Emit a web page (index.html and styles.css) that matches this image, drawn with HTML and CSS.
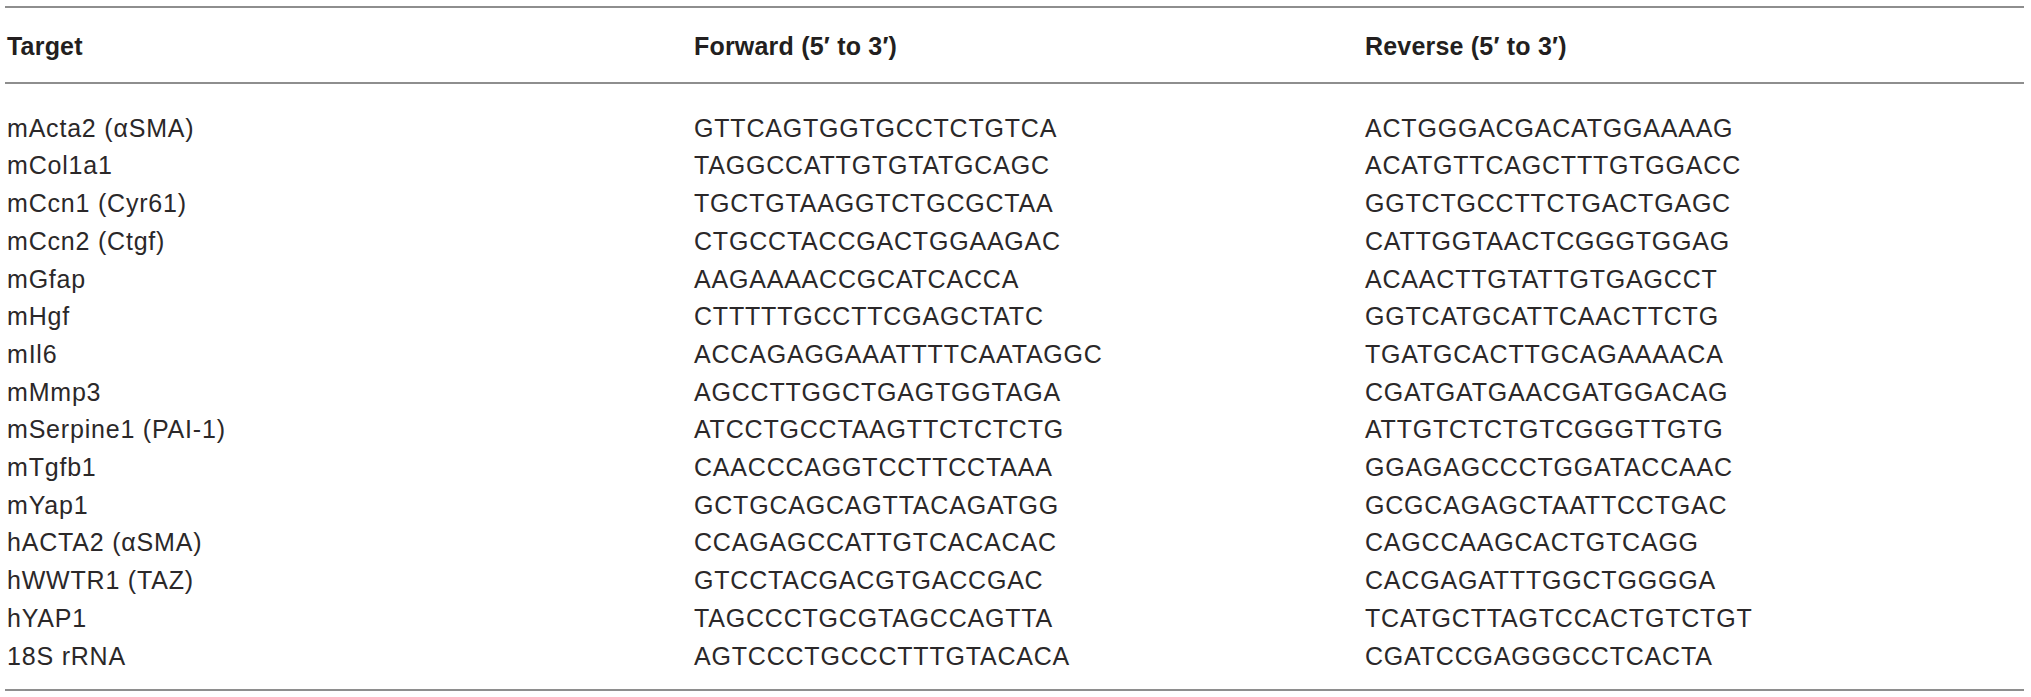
FILE: index.html
```html
<!DOCTYPE html>
<html lang="en">
<head>
<meta charset="utf-8">
<title>Primer table</title>
<link rel="stylesheet" href="styles.css">
</head>
<body>
<table class="primers">
  <colgroup>
    <col class="c-target">
    <col class="c-fwd">
    <col class="c-rev">
  </colgroup>
  <thead>
    <tr><th>Target</th><th>Forward (5′ to 3′)</th><th>Reverse (5′ to 3′)</th></tr>
  </thead>
  <tbody>
    <tr><td>mActa2 (αSMA)</td><td>GTTCAGTGGTGCCTCTGTCA</td><td>ACTGGGACGACATGGAAAAG</td></tr>
    <tr><td>mCol1a1</td><td>TAGGCCATTGTGTATGCAGC</td><td>ACATGTTCAGCTTTGTGGACC</td></tr>
    <tr><td>mCcn1 (Cyr61)</td><td>TGCTGTAAGGTCTGCGCTAA</td><td>GGTCTGCCTTCTGACTGAGC</td></tr>
    <tr><td>mCcn2 (Ctgf)</td><td>CTGCCTACCGACTGGAAGAC</td><td>CATTGGTAACTCGGGTGGAG</td></tr>
    <tr><td>mGfap</td><td>AAGAAAACCGCATCACCA</td><td>ACAACTTGTATTGTGAGCCT</td></tr>
    <tr><td>mHgf</td><td>CTTTTTGCCTTCGAGCTATC</td><td>GGTCATGCATTCAACTTCTG</td></tr>
    <tr><td>mIl6</td><td>ACCAGAGGAAATTTTCAATAGGC</td><td>TGATGCACTTGCAGAAAACA</td></tr>
    <tr><td>mMmp3</td><td>AGCCTTGGCTGAGTGGTAGA</td><td>CGATGATGAACGATGGACAG</td></tr>
    <tr><td>mSerpine1 (PAI-1)</td><td>ATCCTGCCTAAGTTCTCTCTG</td><td>ATTGTCTCTGTCGGGTTGTG</td></tr>
    <tr><td>mTgfb1</td><td>CAACCCAGGTCCTTCCTAAA</td><td>GGAGAGCCCTGGATACCAAC</td></tr>
    <tr><td>mYap1</td><td>GCTGCAGCAGTTACAGATGG</td><td>GCGCAGAGCTAATTCCTGAC</td></tr>
    <tr><td>hACTA2 (αSMA)</td><td>CCAGAGCCATTGTCACACAC</td><td>CAGCCAAGCACTGTCAGG</td></tr>
    <tr><td>hWWTR1 (TAZ)</td><td>GTCCTACGACGTGACCGAC</td><td>CACGAGATTTGGCTGGGGA</td></tr>
    <tr><td>hYAP1</td><td>TAGCCCTGCGTAGCCAGTTA</td><td>TCATGCTTAGTCCACTGTCTGT</td></tr>
    <tr><td>18S rRNA</td><td>AGTCCCTGCCCTTTGTACACA</td><td>CGATCCGAGGGCCTCACTA</td></tr>
  </tbody>
</table>
</body>
</html>
```

FILE: styles.css
```css
html, body {
  margin: 0;
  padding: 0;
  background: #ffffff;
}

body {
  padding: 5.5px 7px 0 5px;
  font-family: "Liberation Sans", Arial, sans-serif;
  color: #262324;
}

.primers {
  width: 2019px;
  border-collapse: collapse;
  border-top: 2px solid #8e8e8e;
  border-bottom: 2px solid #8e8e8e;
  table-layout: fixed;
}

.c-target { width: 687px; }
.c-fwd { width: 671px; }

.primers th,
.primers td {
  padding: 0 0 0 2px;
  font-size: 25px;
  line-height: 37.7px;
  letter-spacing: 0.8px;
  text-align: left;
  white-space: nowrap;
  vertical-align: top;
}

.primers th {
  font-weight: 700;
  letter-spacing: 0.2px;
  color: #231f20;
  padding-top: 20px;
  padding-bottom: 17px;
  border-bottom: 2px solid #8e8e8e;
}

.primers td {
  font-weight: 400;
  color: #2b2829;
}

.primers tbody tr:first-child td {
  padding-top: 25.5px;
}

.primers tbody tr:last-child td {
  padding-bottom: 14px;
}
```
